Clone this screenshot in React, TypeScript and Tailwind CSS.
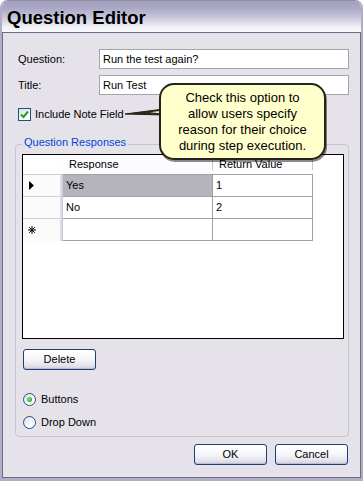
import React from "react"

function XpButton({ label }: { label: string }) {
  return (
    <button className="h-[21px] w-[73px] rounded-[3px] border border-[#1d3f73] bg-[linear-gradient(to_bottom,#ffffff_0%,#f7f7fa_45%,#e6e5ee_80%,#cfcede_100%)] text-[11px] leading-[13px] text-black shadow-[inset_0_-1px_0_#bdbccf]">
      {label}
    </button>
  )
}

function Radio({ checked, label }: { checked?: boolean; label: string }) {
  return (
    <div className="flex items-center h-[13px]">
      <div className="flex h-[13px] w-[13px] items-center justify-center rounded-full border border-[#1c4f86] bg-[linear-gradient(135deg,#dcdce4_0%,#ffffff_70%)]">
        {checked && (
          <div className="h-[5px] w-[5px] rounded-full bg-[radial-gradient(circle_at_40%_40%,#8ee68e_0%,#2fb52f_60%,#1f8f1f_100%)]" />
        )}
      </div>
      <span className="ml-[5px] text-[11px] leading-[13px]">{label}</span>
    </div>
  )
}

function RowHead({ mark, last }: { mark?: "arrow" | "star"; last?: boolean }) {
  return (
    <div className="flex h-[22px] w-[40px]">
      <div className={"flex flex-1 items-center pl-[6px] bg-[#fbfbfc] " + (last ? "" : "border-b border-[#cfcfd4]")}>
        {mark === "arrow" && (
          <svg width="5" height="9" viewBox="0 0 5 9">
            <polygon points="0,0 5,4.5 0,9" fill="#000" />
          </svg>
        )}
        {mark === "star" && (
          <svg width="8" height="8" viewBox="0 0 8 8" className="-ml-[1px]">
            <path d="M4 0V8M0 4H8M1.2 1.2L6.8 6.8M6.8 1.2L1.2 6.8" stroke="#000" strokeWidth="1" />
          </svg>
        )}
      </div>
      <div className="w-[3px] bg-[linear-gradient(to_right,#e4e3ea,#c9c7d4)]" />
    </div>
  )
}

function Cell({ text, w, selected }: { text?: string; w: string; selected?: boolean }) {
  return (
    <div
      className={
        "flex h-[22px] items-center border-r border-b border-[#a0a0a0] pl-[3px] text-[11px] " +
        w +
        (selected ? " bg-[#b5b4bd]" : " bg-white")
      }
    >
      {text}
    </div>
  )
}

export default function App() {
  return (
    <div className="h-[481px] w-[363px] bg-white font-['Liberation_Sans',Arial,sans-serif] text-black">
      <div className="flex h-[481px] w-[363px] flex-col overflow-hidden rounded-t-[8px] border-x-2 border-t border-b-[3px] border-x-[#b0aec4] border-t-[#8e8ca8] border-b-[#b0aec4]">
        {/* title bar */}
        <div className="h-[31px] bg-[linear-gradient(to_bottom,#a29fbd_0%,#aba9c5_25%,#cbc9dc_55%,#eeeef5_82%,#fafafc_100%)] pl-[5px] pt-[6px]">
          <span className="block text-[18.5px] font-bold leading-[22px]">Question Editor</span>
        </div>

        {/* body */}
        <div className="flex flex-1 flex-col border border-[#6d6b8b] bg-[#e6e2e9] pl-[12px] pr-[11px] pt-[16px]">
          <div className="flex h-[20px] items-center">
            <span className="w-[84px] pl-[3px] text-[11px]">Question:</span>
            <div className="flex h-[20px] flex-1 items-center border border-[#a3a5ad] bg-white pl-[3px] text-[11px]">
              Run the test again?
            </div>
          </div>
          <div className="mt-[6px] flex h-[20px] items-center">
            <span className="w-[84px] pl-[3px] text-[11px]">Title:</span>
            <div className="flex h-[20px] flex-1 items-center border border-[#a3a5ad] bg-white pl-[3px] text-[11px]">
              Run Test
            </div>
          </div>

          <div className="mt-[13px] flex h-[13px] items-center pl-[3px]">
            <div className="flex h-[13px] w-[13px] items-center justify-center border border-[#1c4f86] bg-[linear-gradient(135deg,#dcdce4_0%,#ffffff_75%)]">
              <svg width="9" height="9" viewBox="0 0 9 9">
                <path d="M1 4.5L3.5 7L8 1.5" fill="none" stroke="#21a121" strokeWidth="2" />
              </svg>
            </div>
            <span className="ml-[4px] text-[11px] leading-[13px]">Include Note Field</span>
          </div>

          <fieldset className="mt-[15px] rounded-[4px] border border-[#c6c5cc] pb-[7px] pl-[6px] pr-[4px]">
            <legend className="ml-[0px] px-[2px] pb-[3px] text-[11px] leading-[13px] text-[#0046d5]">
              Question Responses
            </legend>

            <div className="mt-[2px] h-[185px] border border-black bg-white">
              {/* header */}
              <div className="flex h-[19px]">
                <div className="w-[40px] bg-white" />
                <div className="flex w-[150px] items-center justify-between bg-[#fcfcfe] pl-[6px] text-[11px]">
                  <span>Response</span>
                  <span className="h-[10px] w-px bg-[#c5c2d8]" />
                </div>
                <div className="flex w-[100px] items-center justify-between bg-[#fcfcfe] pl-[6px] text-[11px]">
                  <span>Return Value</span>
                  <span className="h-[10px] w-px bg-[#c5c2d8]" />
                </div>
              </div>
              {/* rows */}
              <div className="flex">
                <div className="flex flex-col border-t border-[#cfcfd4]">
                  <RowHead mark="arrow" />
                  <RowHead />
                  <RowHead mark="star" last />
                </div>
                <div className="flex flex-col border-t border-[#a0a0a0]">
                  <div className="flex">
                    <Cell text="Yes" w="w-[150px]" selected />
                    <Cell text="1" w="w-[100px]" />
                  </div>
                  <div className="flex">
                    <Cell text="No" w="w-[150px]" />
                    <Cell text="2" w="w-[100px]" />
                  </div>
                  <div className="flex">
                    <Cell w="w-[150px]" />
                    <Cell w="w-[100px]" />
                  </div>
                </div>
              </div>
            </div>

            <div className="ml-[1px] mt-[7px]">
              <XpButton label="Delete" />
            </div>

            <div className="ml-[1px] mt-[23px] flex flex-col gap-[10px]">
              <Radio checked label="Buttons" />
              <Radio label="Drop Down" />
            </div>
          </fieldset>

          <div className="mr-[1px] mt-[7px] flex justify-end gap-[8px]">
            <XpButton label="OK" />
            <XpButton label="Cancel" />
          </div>
        </div>
      </div>

      {/* callout */}
      <svg className="absolute left-[120px] top-[100px]" width="50" height="24" viewBox="0 0 50 24">
        <polygon points="5,14 44,9 44,15" fill="#2a2a1e" stroke="#1f1f14" strokeWidth="1" strokeLinejoin="round" />
        <polygon points="30,12.2 44,10.6 44,13.6" fill="#ffffcc" />
      </svg>
      <div className="absolute left-[159px] top-[83px] flex h-[77px] w-[167px] flex-col items-center justify-center rounded-[15px] border-2 border-[#23231a] bg-[#ffffcc] text-center text-[13px] leading-[16px] shadow-[1px_2px_0_rgba(0,0,0,0.45)]">
        <span>Check this option to</span>
        <span>allow users specify</span>
        <span>reason for their choice</span>
        <span>during step execution.</span>
      </div>
    </div>
  )
}
